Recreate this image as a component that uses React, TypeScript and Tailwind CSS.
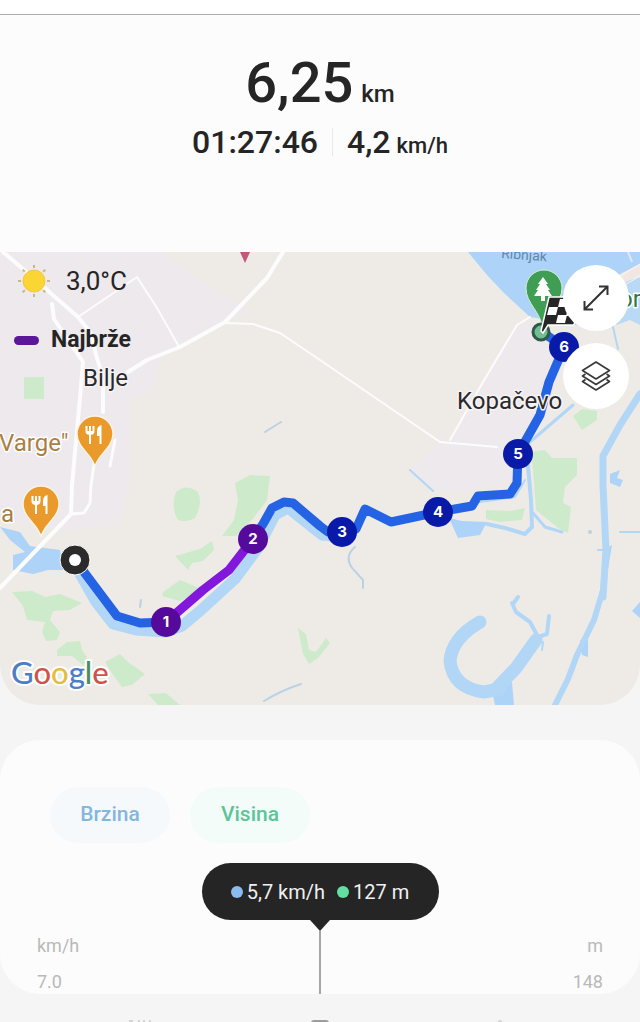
import { useState } from 'react';

interface Marker {
  label: string;
  x: number;
  y: number;
  color: string;
}

const MARKERS: Marker[] = [
  { label: '1', x: 166, y: 622, color: '#560a9c' },
  { label: '2', x: 253, y: 539, color: '#560a9c' },
  { label: '3', x: 342, y: 532, color: '#0a1aa8' },
  { label: '4', x: 438, y: 512, color: '#0a1aa8' },
  { label: '5', x: 518, y: 454, color: '#0a1aa8' },
  { label: '6', x: 564, y: 347, color: '#0a1aa8' },
];

const SUN_RAYS = [0, 45, 90, 135, 180, 225, 270, 315];

function SunIcon() {
  return (
    <svg viewBox="0 0 34 34" className="size-[34px] shrink-0" aria-hidden="true">
      {SUN_RAYS.map((deg) => (
        <path key={deg} d="M17 1v3" stroke="#c9b884" strokeWidth="2" transform={`rotate(${deg} 17 17)`} />
      ))}
      <circle cx="17" cy="17" r="11" fill="#fbd534" stroke="#f3c64a" />
    </svg>
  );
}

function ExpandIcon() {
  return (
    <svg viewBox="0 0 32 32" className="size-8" fill="none" stroke="#333" strokeWidth="2" aria-hidden="true">
      <path d="M4.500 27.500 27.500 4.500M19 4.500h8.500V13M4.500 19v8.500H13" />
    </svg>
  );
}

function LayersIcon() {
  return (
    <svg viewBox="0 0 32 32" className="size-8" fill="none" stroke="#3a3a3a" strokeWidth="1.700" strokeLinejoin="round" aria-hidden="true">
      <path d="M16 2 29.500 10.500 16 19 2.500 10.500z" />
      <path d="M5.500 14 2.500 16 16 24.500 29.500 16 26.500 14" />
      <path d="M5.500 19.500 2.500 21.500 16 30 29.500 21.500 26.500 19.500" />
    </svg>
  );
}

function FoodPin({ x, y }: { x: number; y: number }) {
  return (
    <g transform={`translate(${x} ${y})`}>
      <path
        d="M0 33C-2 21-18 14-18 0A18 18 0 0 1 18 0C18 14 2 21 0 33z"
        fill="#e99a2b"
        stroke="#fbf3e4"
        strokeWidth="1.500"
      />
      <path d="M-8.500-8v5q0 3 3.500 3t3.500-3v-5M-5-8V10" fill="none" stroke="#fff" strokeWidth="2" />
      <path d="M-8-3h6v3h-6z" fill="#fff" />
      <path d="M6.500-9V10H4.500V2H2V-3Q2-8 6.500-9z" fill="#fff" />
    </g>
  );
}

function RouteMap() {
  return (
    <svg
      viewBox="0 252 640 453"
      className="block h-auto w-full font-[Roboto,sans-serif]"
      role="img"
      aria-label="Karta rute Bilje – Kopačevo"
    >
      <rect y="252" width="640" height="453" fill="#eeebe7" />

      {/* naselja */}
      <g fill="#ede9ec">
        <path d="M0 252H160L215 290 250 312 225 322 160 355 155 390 130 400V480L120 525 60 530 0 520z" />
        <path d="M517 325 535 320 560 350 553 405 520 445 515 480 470 492 430 490 410 470 440 442 452 440z" />
      </g>

      {/* zelene površine */}
      <g fill="#cdebca">
        <path d="M24 377h20v22H24z" />
        <path d="M176 492q10-9 22 0 5 12-3 26-10 6-18 1-6-14-1-27z" />
        <path d="M235 483 250 475 270 476 267 500 252 520 236 536 222 536 234 520 238 500z" />
        <path d="M175 556 200 549 209 543 212 541 214 550 203 561 192 563 188 570z" />
        <path d="M163 592 180 580 197 587 200 592 180 601 162 596z" />
        <path d="M12 592 32 591 45 597 60 594 82 603 70 610 53 611 50 620 60 632 57 640 46 641 42 632 45 622 27 620 23 606z" />
        <path d="M57 650 67 642 80 641 82 650 87 657 84 666 72 656 57 656z" />
        <path d="M105 662 120 654 128 662 145 674 132 685 122 687 113 675z" />
        <path d="M148 694 166 693 180 705H158z" />
        <path d="M298 628 306 634 309 650 316 652 326 638 330 643 318 658 309 664 303 654z" />
        <path d="M531 452 545 450 552 458 577 458 577 475 565 487 563 503 571 507 568 533 558 528 536 510 533 470z" />
        <path d="M486 510 510 511 525 508 522 520 500 522 486 519z" />
        <path d="M573 416 582 409 597 411 597 420 582 430z" />
      </g>

      {/* voda */}
      <g fill="#aed3f8">
        <path d="M468 252H640V264L620 274 600 330 560 322 530 317 503 292 487 275z" />
        <path d="M0 527 20 532 30 546 60 550 64 570 48 570 33 574 13 570 13 555 25 552 10 540z" />
        <path d="M449 518 462 521 487 522 480 535 458 538z" />
        <path d="M491 686 512 682 514 705H495z" />
        <path d="M580 640 588 638 588 657 582 655z" />
        <path d="M632 611 640 602V618z" />
        <path d="M603 550 612 545 607 575 602 585z" />
        <path d="M610 474 620 470 617 478 623 480 620 487 610 483z" />
      </g>
      <path d="M621 283 640 277V325L630 320 616 325z" fill="#b9d9f4" />
      <path d="M600 292 640 269" stroke="#f1e6e2" strokeWidth="9" />
      <path d="M600 289 640 264M604 297 640 276" stroke="#fbf6f3" strokeWidth="1" />
      <path d="M628 252 632 262" stroke="#dceafa" strokeWidth="2" />
      <g fill="none" stroke="#b2d6f5" strokeLinejoin="round" strokeLinecap="round">
        <path d="M79 572 96 602 113 624 136 630 165 632 182 626 200 611 235 579 258 548 275 515 288 508 322 535 332 536" strokeWidth="11" />
        <path d="M640 394 620 425 603 456V485L606 550 603 597" strokeWidth="7" />
        <path d="M603 590 594 620 577 655 568 679 555 705" strokeWidth="6" />
        <path d="M527 455 531 500 532 527 525 534 505 528 487 524" strokeWidth="4" />
        <path d="M523 448 573 405M533 513 545 527 562 532" strokeWidth="3" />
        <path d="M480 502 515 497 525 480" strokeWidth="2" />
        <path d="M613 327 618 349M410 470 433 491" strokeWidth="2" />
        <path d="M480 622Q452 638 450 661 453 688 484 692L500 689" strokeWidth="13" />
        <path d="M495 690 516 668 536 640" strokeWidth="13" />
        <path d="M512 603 516 612 530 622 538 637 547 634 549 616M518 597 513 604" strokeWidth="4" />
        <path d="M543 642 542 650M598 550H606M620 532H640" strokeWidth="2" />
      </g>
      <g fill="none" stroke="#b9d2e6" strokeWidth="2" strokeLinecap="round">
        <path d="M265 432 281 422M264 701Q282 690 301 684M140 607 141 600M355 547Q344 556 352 568L363 580 363 588" />
      </g>
      <circle cx="590" cy="532" r="2" fill="#bcd0de" />

      {/* ceste */}
      <g fill="none" stroke="#fdfcfc" strokeLinejoin="round" strokeLinecap="round">
        <path d="M3 252 23 269 78 317 90 332 97 358 103 378V412M283 252 267 278 225 322 180 347 147 360 128 372" strokeWidth="4" />
        <path d="M52 304 54 319 83 362 80 398 72 485 71 514 0 588" strokeWidth="4" />
        <path d="M95 458 91 485 90 503 84 513 71 514M115 440 110 466" strokeWidth="3" />
        <path d="M225 323 253 324 280 333 320 360 440 442 497 447M450 440 483 382 517 325 530 317M78 317 115 292 137 277 157 308 178 345" strokeWidth="2" />
      </g>

      <path d="M240 252H250L245 263z" fill="#c2567c" />

      {/* oznake mjesta */}
      <FoodPin x={95} y={434} />
      <FoodPin x={41} y={504} />
      <text x="501" y="258" fontSize="14" fill="#5f88ab" transform="rotate(4 501 258)">Ribnjak</text>
      <g stroke="#fff" strokeWidth="3" paintOrder="stroke" strokeLinejoin="round">
        <text x="-1" y="451" fontSize="24" fill="#a97f43">Varge"</text>
        <text x="1" y="522" fontSize="24" fill="#a97f43">a</text>
        <text x="619" y="307" fontSize="24" fill="#35753f">or</text>
      </g>

      <path d="M543 330C541 311 526 304 526 288A18 18 0 0 1 562 288C562 304 545 311 543 330z" fill="#3f9d54" stroke="#d9efd9" strokeWidth="1" />
      <path d="M543 277 548 284H546L550 290H548L552 296H545V301H541V296H534L538 290H536L540 284H538z" fill="#fff" />

      {/* ruta */}
      <g fill="none" strokeWidth="9" strokeLinejoin="round">
        <path d="M75 560 117 616 140 623 166 622" stroke="#2463e4" />
        <path d="M253 539 263 524 272 508 284 502 293 503 320 526 328 532 342 532 356 529 365 509 391 522 438 512 472 506 478 496 510 494 517 483 518 454 540 415 549 382 564 347 542 332" stroke="#2463e4" />
        <path d="M166 622 203 590 229 570 253 539" stroke="#8118dc" />
      </g>

      {/* cilj */}
      <circle cx="541" cy="332" r="8" fill="#73bd94" stroke="#2e5a48" strokeWidth="3" />
      <path d="M549 297H580L574 325H548L543 333 541 331z" fill="#262626" stroke="#fff" strokeWidth="1.500" />
      <path d="M549 307h9l-2 8h-9zM560 299h9l-2 8h-9zM558 315h9l-2 8h-9zM568 308h9l-2 8h-9z" fill="#fff" />

      <circle cx="75" cy="560" r="15" fill="#2b2b2b" stroke="#fff" strokeWidth="1" />
      <circle cx="75" cy="560" r="6" fill="#fff" />
      {MARKERS.map((m) => (
        <g key={m.label}>
          <circle cx={m.x} cy={m.y} r="15" fill={m.color} />
          <text
            x={m.x}
            y={m.y + 5}
            fontSize="15"
            fontWeight="700"
            textAnchor="middle"
            fill="#fff"
            className="font-[Inter,sans-serif]"
          >
            {m.label}
          </text>
        </g>
      ))}

      <g fontSize="24" fill="#2a2a2c" stroke="#f6f3f4" strokeWidth="3" paintOrder="stroke" strokeLinejoin="round">
        <text x="83" y="386">Bilje</text>
        <text x="457" y="409">Kopačevo</text>
      </g>

      <text
        x="11"
        y="684"
        fontSize="31"
        className="font-[Lato,sans-serif]"
        stroke="#fff"
        strokeWidth="4"
        paintOrder="stroke"
        strokeLinejoin="round"
        fontWeight="500"
      >
        <tspan fill="#4c7ec6">G</tspan>
        <tspan fill="#cf5349">o</tspan>
        <tspan fill="#e4bc41">o</tspan>
        <tspan fill="#4c7ec6">g</tspan>
        <tspan fill="#47905a">l</tspan>
        <tspan fill="#cf5349">e</tspan>
      </text>
    </svg>
  );
}

export default function App() {
  const [showSpeed, setShowSpeed] = useState(true);
  const [showElevation, setShowElevation] = useState(true);

  return (
    <div className="flex min-h-screen flex-col bg-[#f5f5f5] font-[Roboto,sans-serif] text-[#252525]">
      <div className="h-[15px] border-b border-[#adadad] bg-white" />

      {/* sažetak */}
      <header className="flex flex-col items-center bg-[#fcfcfc] pt-10 pb-[90px] font-medium">
        <h1 className="flex items-baseline gap-2 text-[56px] leading-14">
          6,25 <span className="text-2xl">km</span>
        </h1>
        <div className="mt-[11px] flex items-center text-[32px] leading-10">
          <span>01:27:46</span>
          <span className="mx-[14px] h-7 w-px bg-[#e9e9e9]" />
          <span className="flex items-baseline gap-1.5">
            4,2 <span className="text-[22px] leading-none">km/h</span>
          </span>
        </div>
      </header>

      <main>
        <section className="relative overflow-hidden rounded-b-[40px]">
          <RouteMap />

          <div className="absolute top-3 left-[14px]">
            <div className="flex items-center gap-[15px] pl-[3px] text-[26px] leading-[34px]">
              <SunIcon />
              <span>3,0°C</span>
            </div>
            <div className="mt-[28px] flex items-center gap-3 text-[23px] leading-7 font-bold">
              <span className="h-[9px] w-[25px] rounded-full bg-[#5a1797]" />
              Najbrže
            </div>
          </div>

          <div className="absolute top-[13px] right-[11px] flex flex-col gap-3">
            <button aria-label="Povećaj kartu" className="flex size-[66px] items-center justify-center rounded-full bg-white">
              <ExpandIcon />
            </button>
            <button aria-label="Slojevi karte" className="flex size-[66px] items-center justify-center rounded-full bg-white">
              <LayersIcon />
            </button>
          </div>
        </section>

        {/* grafikon */}
        <section className="mt-[35px] overflow-hidden rounded-[40px] bg-[#fcfcfc] pt-[47px]">
          <div className="flex gap-5 px-[50px] text-[21px] font-medium">
            <button
              onClick={() => setShowSpeed(!showSpeed)}
              aria-pressed={showSpeed}
              className="h-14 w-[120px] rounded-full bg-[#f6f9fc] text-[#84b7dc]"
            >
              Brzina
            </button>
            <button
              onClick={() => setShowElevation(!showElevation)}
              aria-pressed={showElevation}
              className="h-14 w-[120px] rounded-full bg-[#f4fcf9] text-[#5cc598]"
            >
              Visina
            </button>
          </div>

          <div className="mx-auto mt-5 flex h-[57px] w-[237px] items-center justify-center gap-3 rounded-full bg-[#252525] text-xl text-[#f0f0f0]">
            <span className="flex items-center gap-1">
              <span className="size-[12px] rounded-full bg-[#8bbcf0]" />
              5,7 km/h
            </span>
            <span className="flex items-center gap-1">
              <span className="size-[12px] rounded-full bg-[#62dfa0]" />
              127 m
            </span>
          </div>

          <div className="relative px-[37px] pt-[14px] text-lg leading-6 text-[#b9b9b9]">
            <div className="absolute inset-y-0 left-1/2 flex -translate-x-1/2 flex-col items-center">
              <svg viewBox="0 0 20 11" className="h-[11px] w-5" aria-hidden="true">
                <path d="M0 0H20L10 11z" fill="#252525" />
              </svg>
              <span className="w-[2px] grow bg-[#a5a5a5]" />
            </div>
            <div className="flex justify-between">
              <span>km/h</span>
              <span>m</span>
            </div>
            <div className="mt-3 flex justify-between">
              <span>7.0</span>
              <span>148</span>
            </div>
          </div>
        </section>
      </main>

      <nav className="flex h-7 items-start justify-between overflow-hidden px-32 pt-[26px]">
        <svg viewBox="0 0 24 24" className="size-6" aria-hidden="true">
          <path d="M1 1h4M10 1h2M15 1h2M21 1h2" stroke="#d5d5d5" strokeWidth="2" />
        </svg>
        <svg viewBox="0 0 24 24" className="size-6" aria-hidden="true">
          <rect x="4" y="1" width="16" height="20" rx="2" fill="none" stroke="#9c9c9c" strokeWidth="2" />
        </svg>
        <svg viewBox="0 0 24 24" className="size-6" aria-hidden="true">
          <path d="M10 2 12 1 14 2" fill="none" stroke="#d5d5d5" strokeWidth="2" />
        </svg>
      </nav>
    </div>
  );
}
